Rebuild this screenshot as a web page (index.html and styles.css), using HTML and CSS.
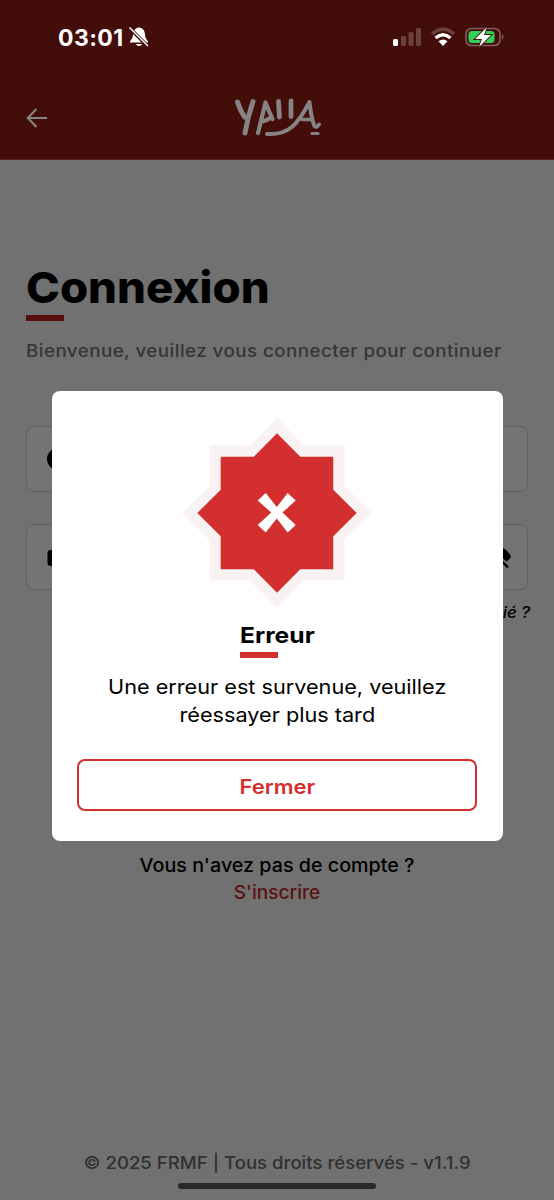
FILE: index.html
```html
<!DOCTYPE html>
<html lang="fr">
<head>
<meta charset="utf-8">
<title>Connexion</title>
<link rel="stylesheet" href="styles.css">
</head>
<body>
<div class="screen">
  <header class="header">
    <div class="status">
      <div class="status-left">
        <span class="clock">03:01</span>
        <svg class="bell" width="22" height="22" viewBox="0 0 22 22"><path d="M11 1.500C7 1.800 5.200 5 5 8.500C4.900 12 3.800 13 2 15.200V16.500H20V15.200C18.200 13 17.100 12 17 8.500C16.800 5 15 1.800 11 1.500ZM8 18H14C13.300 20.600 8.700 20.600 8 18Z" fill="#fff"/><path d="M1 1.500L20.500 21" stroke="#430d0a" stroke-width="3.600"/><path d="M1.500 1.500L20 20" stroke="#fff" stroke-width="1.500"/></svg>
      </div>
      <svg class="status-icons" width="116" height="24" viewBox="0 0 116 24">
        <rect x="1" y="13" width="5" height="7" rx="1.500" fill="#fff"/>
        <g fill="#69413e"><rect x="9" y="10" width="5" height="10" rx="1.500"/><rect x="16.500" y="6" width="5" height="14" rx="1.500"/><rect x="24" y="2" width="5" height="18" rx="1.500"/></g>
        <g fill="none"><path d="M40 8Q51 -1.500 62 8" stroke="#69413e" stroke-width="3.600"/><path d="M43.500 12Q51 5.500 58.500 12" stroke="#fff" stroke-width="3.400"/></g>
        <path d="M46.500 15.300Q51 11.800 55.500 15.300L51 20Z" fill="#fff"/>
        <rect x="74" y="2.500" width="34" height="17" rx="5.500" fill="none" stroke="#815f5c" stroke-width="1.600"/>
        <path d="M110 8Q113 11 110 14Z" fill="#815f5c"/>
        <rect x="76.500" y="5" width="26" height="12" rx="3.500" fill="#32cf59"/>
        <path d="M95 1L83 13H90L87 21L99 9H92Z" fill="#fff" stroke="#430d0a" stroke-width="1.800" paint-order="stroke"/>
      </svg>
    </div>
    <div class="nav">
      <svg class="back" width="22" height="22" viewBox="0 0 22 22"><path d="M21 11H2M10.500 2L1.800 11L10.500 20" fill="none" stroke="#898080" stroke-width="2.200"/></svg>
      <svg class="logo" width="90" height="40" viewBox="0 0 90 40" fill="none" stroke="#858383" stroke-linecap="round" stroke-linejoin="round">
        <path d="M3.500 4Q6 12 10.500 19M19 3.500Q14 18 11 35" stroke-width="5"/>
        <path d="M24 35L31.500 4.500Q34 11 38.500 21M27 24Q32 23 37 19.500" stroke-width="4.200"/>
        <path d="M44.500 3.500L45.500 19M57 3L57 18.500" stroke-width="4.800"/>
        <path d="M33 36Q48 37 58 29Q66 22 75.500 4Q77 18 80 27Q82 31 85 26.500" stroke-width="4"/>
        <path d="M68 21.500H77" stroke-width="3.500"/><path d="M78 35.500H84" stroke-width="3.200"/>
      </svg>
    </div>
  </header>
  <main class="content">
    <h1 class="title"><span>Connexion</span></h1>
    <div class="rule rule-dim"></div>
    <p class="welcome"><span>Bienvenue, veuillez vous connecter pour continuer</span></p>
    <div class="field"><svg width="24" height="24" viewBox="0 0 24 24"><circle cx="12" cy="12" r="11"/></svg></div>
    <div class="field field-password">
      <svg width="22" height="24" viewBox="0 0 22 24"><rect x="1.500" y="5" width="20" height="16" rx="3"/></svg>
      <svg width="28" height="28" viewBox="0 0 28 28"><path d="M1 14Q7 4 14 4Q22 4 27 13.500Q25.500 17 22.500 18.500L15 12L8 21Q3 19 1 14Z"/><path d="M3 3L24 24.500" stroke="#000" stroke-width="2.500"/></svg>
    </div>
    <p class="forgot"><span>Mot de passe oublié ?</span></p>
    <div class="signup"><p><span class="question">Vous n'avez pas de compte ?</span></p><a><span class="register">S'inscrire</span></a></div>
  </main>
  <footer class="footer"><p><span>© 2025 FRMF | Tous droits réservés - v1.1.9</span></p><div class="home"></div></footer>
  <section class="dialog">
    <svg class="star" width="190" height="190" viewBox="0 0 190 190">
      <path d="M95 0L122 27.500H162.500V68L190 95L162.500 122V162.500H122L95 190L68 162.500H27.500V122L0 95L27.500 68V27.500H68Z" fill="#f9f2f3"/>
      <path d="M95 15.300L118.300 38.700H151.300V71.700L174.700 95L151.300 118.300V151.300H118.300L95 174.700L71.700 151.300H38.700V118.300L15.300 95L38.700 71.700V38.700H71.700Z" fill="#d32f2f"/>
      <path d="M83.700 75L94.800 89L105.700 75L113.700 82.500L100.500 94.500L113.700 107L105.700 114.500L94.800 100.500L83.700 114.500L75.700 107L89.200 94.500L75.700 82.500Z" fill="#fff"/>
    </svg>
    <div class="heading"><h2><span>Erreur</span></h2><div class="rule"></div></div>
    <p class="message"><span class="line-one">Une erreur est survenue, veuillez</span><br><span class="line-two">réessayer plus tard</span></p>
    <button class="close"><span>Fermer</span></button>
  </section>
</div>
</body>
</html>
```
FILE: styles.css
```css
* { box-sizing: border-box; }
body, h1, h2, p { margin: 0; }
body { font-family: Inter, "Noto Sans", sans-serif; }
span { display: inline-block; white-space: nowrap; }
svg { display: block; flex: none; }
.screen { position: relative; width: 554px; height: 1200px; overflow: hidden; display: flex; flex-direction: column; background: #717171; color: #000; }
.header { height: 160px; background: #430d0a; border-bottom: 1px solid #59211e; }
.status { display: flex; justify-content: space-between; padding: 26px 46px 0 58px; height: 76px; }
.status-left { display: flex; gap: 3px; }
.clock { font-size: 23px; line-height: 24px; font-weight: 700; color: #fff; width: 67px; letter-spacing: .4px; }
.nav { display: flex; align-items: center; padding-left: 26px; height: 84px; }
.logo { margin-left: 186px; }
.content { padding: 100px 26px 0; flex: 1; }
.title { height: 55px; font-size: 43px; line-height: 55px; font-weight: 800; }
.title span { transform: scaleX(1.06); transform-origin: left; }
.rule { width: 38px; height: 6px; background: #d32f2f; }
.rule-dim { background: #550f0d; }
.welcome { margin-top: 18px; font-size: 17px; line-height: 24px; font-weight: 500; color: #353535; }
.welcome span { letter-spacing: .4px; transform: scaleX(1.104); transform-origin: left; }
.field { margin-top: 63px; height: 66px; border: 1.500px solid #606060; border-radius: 8px; display: flex; align-items: center; justify-content: space-between; padding: 0 15px 0 19px; background: #747474; }
.field-password { margin-top: 32px; }
.forgot { margin-top: 10px; margin-right: -2px; line-height: 24px; font-size: 16px; font-style: italic; font-weight: 500; text-align: right; }
.forgot span { transform: scaleX(1.06); transform-origin: right; }
.signup { margin-top: 228px; text-align: center; line-height: 27px; font-size: 18.500px; font-weight: 500; }
.question { transform: scaleX(1.065); }
.register { color: #5b1210; transform: scaleX(1.03); }
.footer { text-align: center; height: 50px; color: #303030; font-size: 17px; line-height: 27px; font-weight: 500; }
.footer span { transform: scaleX(1.093); }
.home { width: 198px; height: 6px; border-radius: 3px; background: #292929; margin: 6px auto 0; }
.dialog { position: absolute; left: 51.500px; top: 391px; width: 451px; height: 450px; padding: 27px 25.500px 30px; border-radius: 8px; background: #fff; display: flex; flex-direction: column; align-items: center; }
.star { margin-left: -1px; }
.heading { width: 75px; margin-top: 13px; }
h2 { height: 31px; font-size: 22px; line-height: 28px; font-weight: 700; }
h2 span { transform: scaleX(1.12); transform-origin: left; }
.message { margin-top: 15px; text-align: center; font-size: 20px; line-height: 28px; }
.message span { transform: scaleX(1.083); }
.close { margin-top: auto; width: 400px; height: 52px; flex: none; padding: 3px 0 0; font: 600 20px Inter, sans-serif; color: #d32f2f; border: 2px solid #d32f2f; border-radius: 8px; background: #fff; }
.close span { transform: scaleX(1.1); }
```
